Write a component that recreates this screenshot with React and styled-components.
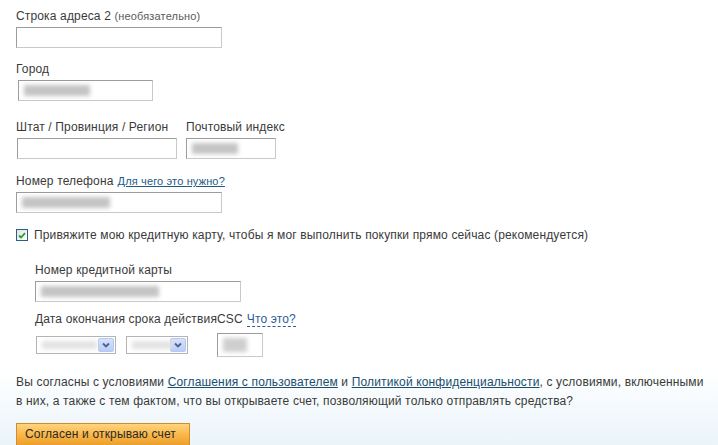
import React from "react";
import styled, { createGlobalStyle } from "styled-components";

const GlobalStyle = createGlobalStyle`
  html, body {
    margin: 0;
    height: 100%;
  }
  body {
    background: linear-gradient(to bottom, #ffffff 0, #ffffff 370px, #eaf4fa 445px);
    font-family: "Liberation Sans", Arial, sans-serif;
    font-size: 12px;
    letter-spacing: 0.15px;
    color: #3a3a3a;
    overflow: hidden;
  }
`;

const Page = styled.div`
  padding: 9px 0 0 16px;
`;

const Field = styled.div`
  margin-bottom: ${(p) => p.$mb || 0}px;
`;

const Label = styled.div`
  line-height: 14px;
  white-space: nowrap;
`;

const Hint = styled.span`
  font-size: 11px;
  color: #5a5a5a;
`;

const SmallLink = styled.a`
  font-size: 11px;
  color: #1d5a86;
  text-decoration: underline;
  margin-left: 4px;
`;

const DottedLink = styled.a`
  color: #2a5d9a;
  text-decoration: none;
  border-bottom: 1px dashed #2a5d9a;
  margin-left: 4px;
`;

const Box = styled.div`
  margin-top: 4px;
  margin-left: ${(p) => p.$ml || 0}px;
  width: ${(p) => p.$w}px;
  height: ${(p) => p.$h || 21}px;
  box-sizing: border-box;
  border: 1px solid;
  border-color: #9c9c9c #c9c9c9 #c9c9c9 #9c9c9c;
  background: #fff;
  position: relative;
  overflow: hidden;
`;

const Blur = styled.span`
  position: absolute;
  top: 4px;
  bottom: 4px;
  left: 5px;
  width: ${(p) => p.$w}px;
  background: ${(p) => p.$c || "#c4c4c4"};
  filter: blur(2px);
`;

const Row = styled.div`
  display: flex;
  gap: ${(p) => p.$gap || 9}px;
  margin-bottom: ${(p) => p.$mb || 0}px;
`;

const CheckRow = styled.label`
  display: flex;
  align-items: center;
  gap: 6px;
  line-height: 14px;
  margin-bottom: 21px;
`;

const CheckBox = styled.span`
  width: 12px;
  height: 12px;
  box-sizing: border-box;
  border: 1px solid #2b5e8a;
  background: linear-gradient(135deg, #e2e2dc, #ffffff);
  display: flex;
  align-items: center;
  justify-content: center;
`;

const Indent = styled.div`
  padding-left: 19px;
`;

const ExpiryGrid = styled.div`
  display: grid;
  grid-template-columns: 182px auto;
  margin-bottom: 16px;
`;

const Selects = styled.div`
  display: flex;
  align-items: center;
  gap: 10px;
  height: 24px;
  margin-top: 7px;
  padding-left: 1px;
`;

const SelectBox = styled.div`
  width: ${(p) => p.$w}px;
  height: 18px;
  box-sizing: border-box;
  border: 1px solid #b4b4b4;
  background: #fff;
  position: relative;
  display: flex;
  justify-content: flex-end;
  padding: 1px;
`;

const DropButton = styled.span`
  width: 16px;
  height: 100%;
  box-sizing: border-box;
  border: 1px solid #b7c8ef;
  border-radius: 2px;
  background: linear-gradient(to bottom, #d6e2fd, #b9cdf9);
  display: flex;
  align-items: center;
  justify-content: center;
`;

const CscInput = styled(Box)`
  margin-top: 7px;
`;

const Terms = styled.p`
  margin: 0 0 12px;
  width: 700px;
  line-height: 19px;
`;

const TermsLink = styled.a`
  color: #1b4e6e;
  text-decoration: underline;
`;

const Submit = styled.button`
  width: 174px;
  height: 23px;
  border: 1px solid #d08d2c;
  background: linear-gradient(to bottom, #ffd47e 0%, #f8b545 55%, #ec9f2c 100%);
  font-family: "Liberation Sans", Arial, sans-serif;
  font-size: 12px;
  letter-spacing: 0.15px;
  color: #2a2a2a;
  text-align: left;
  padding: 0 0 2px 8px;
`;

function Chevron() {
  return (
    <svg width="8" height="6" viewBox="0 0 8 6">
      <path d="M1 1.5 L4 4.5 L7 1.5" fill="none" stroke="#4d6185" strokeWidth="1.8" />
    </svg>
  );
}

function Select({ w, blur }) {
  return (
    <SelectBox $w={w}>
      <Blur $w={blur} $c="#e2e2e2" />
      <DropButton>
        <Chevron />
      </DropButton>
    </SelectBox>
  );
}

export default function App() {
  return (
    <>
      <GlobalStyle />
      <Page>
        <Field $mb={14}>
          <Label>
            Строка адреса 2 <Hint>(необязательно)</Hint>
          </Label>
          <Box $w={206} />
        </Field>

        <Field $mb={19}>
          <Label>Город</Label>
          <Box $w={135} $ml={2}>
            <Blur $w={66} />
          </Box>
        </Field>

        <Row $gap={9} $mb={15}>
          <Field>
            <Label>Штат / Провинция / Регион</Label>
            <Box $w={160} $ml={1} />
          </Field>
          <Field>
            <Label>Почтовый индекс</Label>
            <Box $w={90}>
              <Blur $w={46} />
            </Box>
          </Field>
        </Row>

        <Field $mb={15}>
          <Label>
            Номер телефона
            <SmallLink href="#">Для чего это нужно?</SmallLink>
          </Label>
          <Box $w={206}>
            <Blur $w={88} />
          </Box>
        </Field>

        <CheckRow>
          <CheckBox>
            <svg width="8" height="7" viewBox="0 0 8 7">
              <path d="M1 3.5 L3 5.5 L7 1.2" fill="none" stroke="#22a02a" strokeWidth="1.8" />
            </svg>
          </CheckBox>
          Привяжите мою кредитную карту, чтобы я мог выполнить покупки прямо сейчас (рекомендуется)
        </CheckRow>

        <Indent>
          <Field $mb={10}>
            <Label>Номер кредитной карты</Label>
            <Box $w={206}>
              <Blur $w={118} />
            </Box>
          </Field>

          <ExpiryGrid>
            <div>
              <Label>Дата окончания срока действия</Label>
              <Selects>
                <Select w={80} blur={55} />
                <Select w={62} blur={40} />
              </Selects>
            </div>
            <div>
              <Label>
                CSC
                <DottedLink href="#">Что это?</DottedLink>
              </Label>
              <CscInput $w={46} $h={24}>
                <Blur $w={24} $c="#cfcfcf" />
              </CscInput>
            </div>
          </ExpiryGrid>
        </Indent>

        <Terms>
          Вы согласны с условиями <TermsLink href="#">Соглашения с пользователем</TermsLink> и{" "}
          <TermsLink href="#">Политикой конфиденциальности</TermsLink>, с условиями, включенными
          <br />
          в них, а также с тем фактом, что вы открываете счет, позволяющий только отправлять средства?
        </Terms>

        <Submit>Согласен и открываю счет</Submit>
      </Page>
    </>
  );
}
